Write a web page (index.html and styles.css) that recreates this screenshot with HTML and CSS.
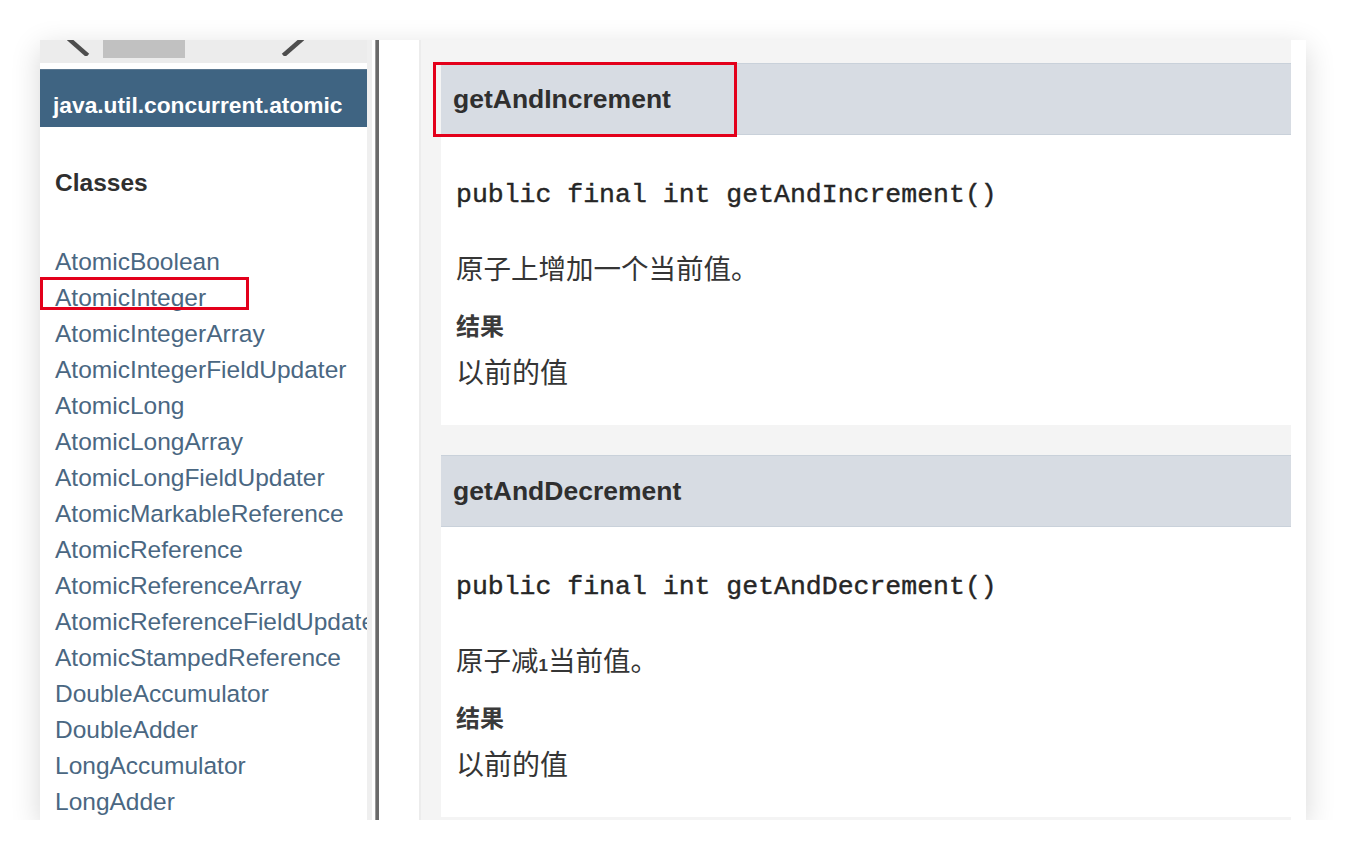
FILE: index.html
```html
<!DOCTYPE html>
<html lang="zh">
<head>
<meta charset="utf-8">
<title>java.util.concurrent.atomic</title>
<link rel="stylesheet" href="styles.css">
</head>
<body>
<div class="card">
  <aside class="nav">
    <div class="hscroll">
      <svg class="arrow arrow-left" width="24" height="16" viewBox="0 0 24 16"><path d="M3 0 L19 14"/></svg>
      <div class="thumb"></div>
      <svg class="arrow arrow-right" width="24" height="16" viewBox="0 0 24 16"><path d="M20 0 L4 14"/></svg>
    </div>
    <div class="pkg">java.util.concurrent.atomic</div>
    <h2 class="classes-title">Classes</h2>
    <ul class="class-list">
      <li><a>AtomicBoolean</a></li>
      <li class="marked"><a>AtomicInteger</a><span class="mark mark-li"></span></li>
      <li><a>AtomicIntegerArray</a></li>
      <li><a>AtomicIntegerFieldUpdater</a></li>
      <li><a>AtomicLong</a></li>
      <li><a>AtomicLongArray</a></li>
      <li><a>AtomicLongFieldUpdater</a></li>
      <li><a>AtomicMarkableReference</a></li>
      <li><a>AtomicReference</a></li>
      <li><a>AtomicReferenceArray</a></li>
      <li><a>AtomicReferenceFieldUpdater</a></li>
      <li><a>AtomicStampedReference</a></li>
      <li><a>DoubleAccumulator</a></li>
      <li><a>DoubleAdder</a></li>
      <li><a>LongAccumulator</a></li>
      <li><a>LongAdder</a></li>
    </ul>
  </aside>
  <div class="nav-edge"></div>
  <div class="divider"></div>
  <main class="main">
    <div class="content">
      <section class="method">
        <h4 class="method-head">getAndIncrement<span class="mark mark-head"></span></h4>
        <div class="method-body">
          <pre class="sig">public final int getAndIncrement()</pre>
          <p class="desc">原子上增加一个当前值。</p>
          <p class="label">结果</p>
          <p class="desc ret">以前的值</p>
        </div>
      </section>
      <section class="method">
        <h4 class="method-head">getAndDecrement</h4>
        <div class="method-body">
          <pre class="sig">public final int getAndDecrement()</pre>
          <p class="desc">原子减<span class="small-one">1</span>当前值。</p>
          <p class="label">结果</p>
          <p class="desc ret">以前的值</p>
        </div>
      </section>
    </div>
    <div class="right-gutter"></div>
  </main>
</div>
</body>
</html>
```
FILE: styles.css
```css
html, body {
  margin: 0;
  padding: 0;
  background: #ffffff;
}
body {
  font-family: "Liberation Sans", Arial, sans-serif;
  color: #353833;
}
.card {
  margin: 40px 40px 0 40px;
  width: 1266px;
  height: 780px;
  overflow: hidden;
  display: flex;
  background: #ffffff;
  box-shadow: 0 8px 28px rgba(0, 0, 0, 0.16);
}

/* ---------- left navigation frame ---------- */
.nav {
  width: 327px;
  flex: none;
  background: #ffffff;
  overflow: hidden;
}
.hscroll {
  height: 23px;
  background: #ececec;
  display: flex;
  align-items: flex-start;
}
.arrow {
  flex: none;
  stroke: #4d4d4d;
  stroke-width: 4.5;
  fill: none;
  stroke-linecap: square;
}
.arrow-left {
  margin-left: 27px;
}
.thumb {
  margin-left: 12px;
  width: 82px;
  height: 18px;
  background: #c1c1c1;
}
.arrow-right {
  margin-left: 96px;
}
.pkg {
  margin-top: 6px;
  height: 58px;
  box-sizing: border-box;
  border-top: 1px solid #5c7890;
  background: #3f6482;
  color: #ffffff;
  font-weight: bold;
  font-size: 22.75px;
  line-height: 26px;
  padding: 22px 0 0 13px;
  white-space: nowrap;
}
.classes-title {
  margin: 41px 0 0 15px;
  font-size: 24.5px;
  line-height: 30px;
  font-weight: bold;
  color: #2f2f2f;
}
.class-list {
  list-style: none;
  margin: 46px 0 0 0;
  padding: 0 0 0 15px;
}
.class-list li {
  position: relative;
  font-size: 24.5px;
  line-height: 36px;
  white-space: nowrap;
}
.class-list a {
  color: #4a6782;
  text-decoration: none;
}
.mark {
  position: absolute;
  border: 3px solid #e3001b;
  box-sizing: border-box;
  pointer-events: none;
}
.mark-li {
  left: -15px;
  top: -3px;
  width: 209px;
  height: 33px;
}
.nav-edge {
  width: 5px;
  flex: none;
  background: #efefef;
}
.divider {
  flex: none;
  width: 4px;
  margin-left: 3px;
  background: #6a6a6a;
  border-left: 1px solid #9a9a9a;
  box-sizing: border-box;
}

/* ---------- main frame ---------- */
.main {
  flex: 1;
  display: flex;
  padding-left: 40px;
  background: #ffffff;
}
.content {
  flex: 1;
  background: #f4f4f4;
  border-left: 2px solid #ececec;
  padding: 23px 0 0 20px;
}
.right-gutter {
  width: 15px;
  flex: none;
}
.method {
  background: #ffffff;
  margin-bottom: 30px;
}
.method-head {
  position: relative;
  margin: 0;
  height: 72px;
  box-sizing: border-box;
  background: #d7dce3;
  border-top: 1px solid #c9d1da;
  border-bottom: 1px solid #c9d1da;
  font-size: 26.5px;
  line-height: 70px;
  font-weight: bold;
  color: #2f2f2f;
  padding-left: 12px;
}
.mark-head {
  left: -8px;
  top: -2px;
  width: 304px;
  height: 75px;
}
.method-body {
  height: 290px;
  box-sizing: border-box;
  padding: 45px 0 0 15px;
}
.sig {
  margin: 0;
  font-family: "Liberation Mono", "Courier New", monospace;
  font-size: 26.5px;
  line-height: 30px;
  color: #262626;
  -webkit-text-stroke: 0.4px #262626;
}
.desc {
  margin: 42px 0 0 0;
  height: 36px;
  font-family: "Liberation Sans", "Noto Sans CJK SC", sans-serif;
  font-size: 27.5px;
  line-height: 36px;
  color: #353535;
}
.small-one {
  font-size: 17px;
  font-weight: bold;
  line-height: 0;
}
.label {
  margin: 24px 0 0 0;
  font-family: "Liberation Sans", "Noto Sans CJK SC", sans-serif;
  font-size: 24px;
  line-height: 30px;
  font-weight: bold;
  color: #3a3a3a;
}
.desc.ret {
  margin-top: 14px;
  font-size: 28px;
}
```
